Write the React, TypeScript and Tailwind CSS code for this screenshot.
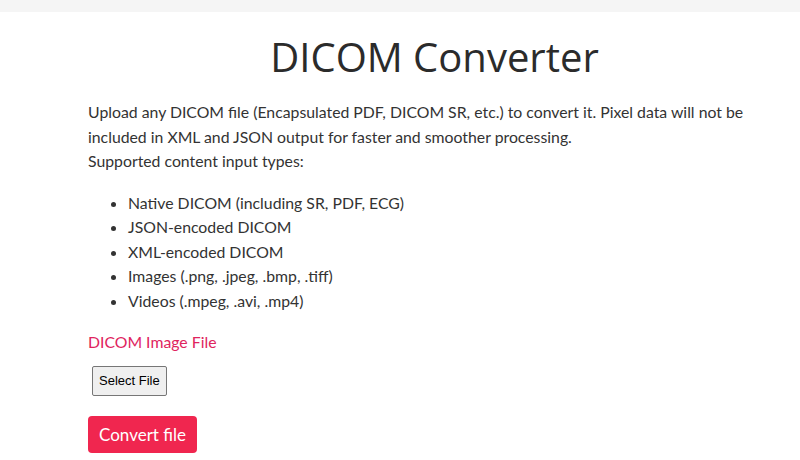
import React from "react";

export default function App() {
  const items = [
    "Native DICOM (including SR, PDF, ECG)",
    "JSON-encoded DICOM",
    "XML-encoded DICOM",
    "Images (.png, .jpeg, .bmp, .tiff)",
    "Videos (.mpeg, .avi, .mp4)",
  ];
  return (
    <div className="w-[800px] h-[460px] bg-white overflow-hidden text-[#333333]" style={{ fontFamily: "Lato, 'Noto Sans', sans-serif" }}>
      <div className="h-[12px] bg-[#f5f5f5]" />
      <div className="pl-[88px] pr-[19px]">
        <h1 className="text-center text-[40px] leading-[48px] mt-[21px] text-[#2b2b2b]" style={{ fontFamily: "'Open Sans', sans-serif" }}>
          DICOM Converter
        </h1>
        <p className="mt-[19px] text-[15.8px] leading-[24.5px]">
          Upload any DICOM file (Encapsulated PDF, DICOM SR, etc.) to convert it. Pixel data will not be included in XML and JSON output for faster and smoother processing.
          <br />
          Supported content input types:
        </p>
        <ul className="mt-[17px] list-disc pl-[40px] text-[15.8px] leading-[24.5px]">
          {items.map((t) => (
            <li key={t}>{t}</li>
          ))}
        </ul>
        <div className="mt-[17px] text-[15.8px] leading-[24px] text-[#e0245e]">DICOM Image File</div>
        <button className="mt-[12px] ml-[4px] h-[30px] px-[6px] border border-[#767676] bg-[#efefef] rounded-[2px] text-[13px] text-black" style={{ fontFamily: "'Liberation Sans', sans-serif" }}>
          Select File
        </button>
        <div>
          <button className="mt-[20px] h-[37px] w-[109px] rounded-[4px] bg-[#f0264f] text-white text-[17px]">
            Convert file
          </button>
        </div>
      </div>
    </div>
  );
}
